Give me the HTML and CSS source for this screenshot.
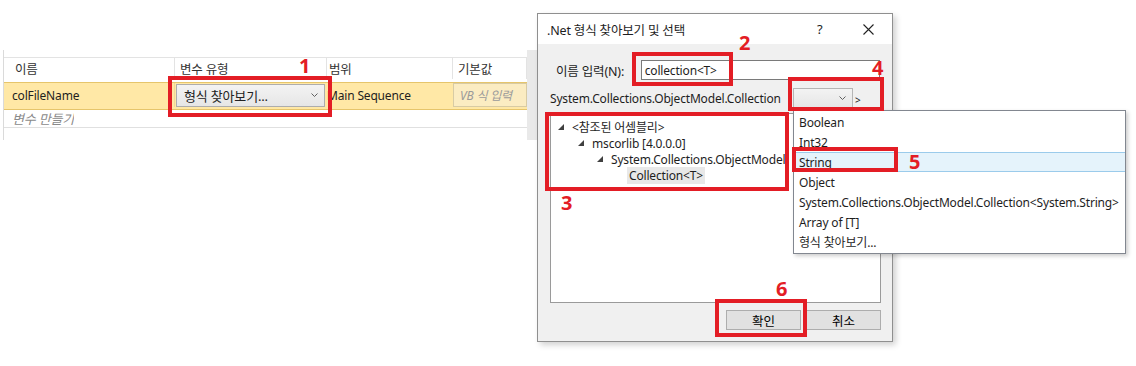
FILE: index.html
```html
<!DOCTYPE html>
<html lang="ko">
<head>
    <meta charset="UTF-8">
    <title>.Net 형식 찾아보기 및 선택</title>
    <link rel="stylesheet" href="styles.css">
</head>
<body>

<div class="stage">
    <div class="var-panel">
        <div class="var-grid">
            <div class="grid-row head-row">
                <div class="cell c-name first">이름</div>
                <div class="cell c-type">변수 유형</div>
                <div class="cell c-scope">범위</div>
                <div class="cell c-default">기본값</div>
            </div>
            <div class="grid-row sel-row">
                <div class="cell c-name first">colFileName</div>
                <div class="cell c-type">
                    <div class="combo wide">
                        <span>형식 찾아보기...</span>
                        <svg class="chev" width="7" height="4" viewBox="0 0 7 4"><polyline points="0.5,0.5 3.5,3.5 6.5,0.5" fill="none" stroke="#606060" stroke-width="1"/></svg>
                    </div>
                </div>
                <div class="cell c-scope">Main Sequence</div>
                <div class="cell c-default"><div class="expr">VB 식 입력</div></div>
            </div>
            <div class="grid-row new-row">
                <div class="cell first hint">변수 만들기</div>
            </div>
        </div>
        <div class="scroll-strip"></div>
    </div>

    <div class="dialog">
        <div class="title-bar">
            <span class="title">.Net 형식 찾아보기 및 선택</span>
            <span class="help">?</span>
            <svg class="close" width="11" height="11" viewBox="0 0 11 11"><path d="M0.5 0.5 L10.5 10.5 M10.5 0.5 L0.5 10.5" stroke="#222" stroke-width="1.1"/></svg>
        </div>
        <div class="dialog-body">
            <div class="name-row">
                <label class="name-label">이름 입력(N):</label>
                <div class="name-input">collection&lt;T&gt;</div>
            </div>
            <div class="generic-row">
                <span class="generic-name">System.Collections.ObjectModel.Collection</span>
                <div class="combo small">
                    <svg class="chev" width="7" height="4" viewBox="0 0 7 4"><polyline points="0.5,0.5 3.5,3.5 6.5,0.5" fill="none" stroke="#606060" stroke-width="1"/></svg>
                </div>
                <span class="gt">&gt;</span>
            </div>
            <div class="tree">
                <div class="node lvl0"><svg class="tri" width="6" height="6" viewBox="0 0 6 6"><polygon points="6,0 6,6 0,6" fill="#404040"/></svg>&lt;참조된 어셈블리&gt;</div>
                <div class="node lvl1"><svg class="tri" width="6" height="6" viewBox="0 0 6 6"><polygon points="6,0 6,6 0,6" fill="#404040"/></svg>mscorlib [4.0.0.0]</div>
                <div class="node lvl2"><svg class="tri" width="6" height="6" viewBox="0 0 6 6"><polygon points="6,0 6,6 0,6" fill="#404040"/></svg>System.Collections.ObjectModel</div>
                <div class="node lvl3"><span class="picked">Collection&lt;T&gt;</span></div>
            </div>
            <div class="buttons">
                <button class="btn">확인</button>
                <button class="btn">취소</button>
            </div>
        </div>
    </div>

    <ul class="drop-list">
        <li>Boolean</li>
        <li>Int32</li>
        <li class="hot">String</li>
        <li>Object</li>
        <li>System.Collections.ObjectModel.Collection&lt;System.String&gt;</li>
        <li>Array of [T]</li>
        <li>형식 찾아보기...</li>
    </ul>

    <!-- step markers drawn over the screenshot -->
    <div class="mark m1"></div><span class="num n1">1</span>
    <div class="mark m2"></div><span class="num n2">2</span>
    <div class="mark m3"></div><span class="num n3">3</span>
    <div class="mark m4"></div><span class="num n4">4</span>
    <div class="mark m5"></div><span class="num n5">5</span>
    <div class="mark m6"></div><span class="num n6">6</span>
</div>

</body>
</html>
```

FILE: styles.css
```css
body {
    margin: 0;
    background-color: #ffffff;
    font-family: "Noto Sans", "Noto Sans CJK KR", sans-serif;
    font-size: 12px;
    letter-spacing: -0.17px;
    color: #1e1e1e;
}
.stage {
    position: relative;
    width: 1136px;
    height: 366px;
    display: flex;
    align-items: flex-start;
    overflow: hidden;
}

/* variables grid */
.var-panel {
    display: flex;
    margin-top: 50px;
    margin-left: 3px;
    height: 90px;
}
.var-grid {
    width: 523px;
    border-left: 1px solid #dadada;
    padding-top: 7px;
    overflow: hidden;
}
.scroll-strip {
    width: 10px;
    background-color: #e9e9e9;
}
.grid-row {
    display: flex;
}
.cell {
    box-sizing: border-box;
    padding-left: 5px;
    display: flex;
    align-items: center;
    white-space: nowrap;
    overflow: hidden;
}
.first { padding-left: 8px; }
.c-name { width: 171px; }
.c-type { width: 152px; }
.c-scope { width: 126px; padding-left: 2px; }
.c-default { width: 74px; }
.head-row {
    height: 25px;
    border-top: 1px solid #e3e3e3;
    box-sizing: border-box;
    color: #333;
    padding-bottom: 3px;
}
.head-row .cell { border-right: 1px solid #e3e3e3; font-size: 12.5px; }
.head-row .c-name { padding-left: 11px; }
.sel-row {
    height: 28px;
    background-color: #ffe8a6;
    border-top: 1px solid #e6c56b;
    border-bottom: 1px solid #e6c56b;
    box-sizing: border-box;
    padding-bottom: 2px;
}
.sel-row .c-name { border-right: 1px solid #f0d898; }
.sel-row .c-type { padding-left: 1px; }
.sel-row .c-scope { padding-left: 0; }
.combo {
    box-sizing: border-box;
    display: flex;
    align-items: center;
    justify-content: space-between;
    border: 1px solid #adadad;
    background: linear-gradient(#f3f3f3, #e6e6e6);
}
.combo.wide {
    width: 149px;
    height: 23px;
    padding: 0 6px 0 7px;
    font-size: 13px;
    color: #222;
}
.sel-row .c-default { padding-left: 0; }
.expr {
    box-sizing: border-box;
    width: 80px;
    height: 24px;
    border: 1px solid #d8cba4;
    background-color: #fbecc2;
    color: #9a9a9a;
    font-style: italic;
    padding-left: 6px;
    display: flex;
    align-items: center;
}
.new-row {
    height: 17px;
    border-bottom: 1px solid #e0e0e0;
}
.hint {
    color: #8a8a8a;
    font-style: italic;
    font-size: 13px;
}

/* dialog */
.dialog {
    margin-top: 13px;
    width: 356px;
    height: 329px;
    box-sizing: border-box;
    border: 1px solid #8f8f8f;
    background-color: #f0f0f0;
    box-shadow: 3px 3px 6px rgba(0, 0, 0, 0.18);
    display: flex;
    flex-direction: column;
}
.title-bar {
    height: 30px;
    background-color: #ffffff;
    display: flex;
    align-items: center;
    padding-left: 9px;
}
.title { flex: 1; font-size: 12.5px; }
.help { width: 46px; font-size: 13px; }
.close { margin-right: 18px; }
.dialog-body {
    flex: 1;
    display: flex;
    flex-direction: column;
    padding: 16px 12px 11px 12px;
}
.name-row {
    display: flex;
    align-items: center;
    height: 20px;
}
.name-label {
    width: 85px;
    padding-left: 6px;
    font-size: 12.5px;
}
.name-input {
    box-sizing: border-box;
    width: 240px;
    height: 20px;
    border: 1px solid #7a7a7a;
    background-color: #ffffff;
    padding-left: 3px;
    display: flex;
    align-items: center;
}
.generic-row {
    display: flex;
    align-items: center;
    height: 20px;
    margin-top: 8px;
}
.generic-name { width: 243px; }
.combo.small {
    width: 60px;
    height: 20px;
    justify-content: flex-end;
    padding-right: 6px;
    border-color: #b5b5b5;
}
.gt { margin-left: 2px; font-size: 10px; padding-top: 3px; }
.tree {
    box-sizing: border-box;
    margin-top: 5px;
    height: 190px;
    width: 331px;
    border: 1px solid #9a9a9a;
    background-color: #ffffff;
    padding-top: 5px;
}
.node {
    height: 16px;
    display: flex;
    align-items: center;
    white-space: nowrap;
}
.tri { margin-right: 8px; }
.lvl0 { padding-left: 7px; }
.lvl1 { padding-left: 27px; }
.lvl2 { padding-left: 46px; }
.lvl3 { padding-left: 76px; }
.picked {
    background-color: #e8e8e8;
    padding: 0 2px;
}
.buttons {
    display: flex;
    justify-content: flex-end;
    gap: 5px;
    margin-top: 7px;
    margin-right: -1px;
}
.btn {
    width: 75px;
    height: 20px;
    border: 1px solid #adadad;
    background-color: #e1e1e1;
    font-family: inherit;
    font-size: 12.5px;
    padding: 0;
}

/* opened dropdown */
.drop-list {
    position: absolute;
    left: 793px;
    top: 110px;
    width: 333px;
    margin: 0;
    padding: 1px 0;
    list-style: none;
    box-sizing: border-box;
    border: 1px solid #828790;
    background-color: #ffffff;
    box-shadow: 2px 2px 4px rgba(0, 0, 0, 0.2);
}
.drop-list li {
    height: 20px;
    box-sizing: border-box;
    padding-left: 5px;
    display: flex;
    align-items: center;
    white-space: nowrap;
}
.drop-list li.hot {
    background-color: #e5f3fb;
    border-top: 1px solid #9bcbeb;
    border-bottom: 1px solid #9bcbeb;
}

/* red markers */
.mark {
    position: absolute;
    box-sizing: border-box;
    border: 4px solid #e31d25;
}
.m1 { left: 168px; top: 76px; width: 164px; height: 41px; }
.m2 { left: 632px; top: 52px; width: 101px; height: 34px; }
.m3 { left: 545px; top: 112px; width: 244px; height: 79px; }
.m4 { left: 788px; top: 77px; width: 96px; height: 34px; }
.m5 { left: 792px; top: 147px; width: 106px; height: 25px; }
.m6 { left: 715px; top: 299px; width: 92px; height: 38px; }
.num {
    position: absolute;
    color: #e31d25;
    font-family: "Noto Sans", sans-serif;
    font-weight: bold;
    font-size: 20px;
    line-height: 20px;
    letter-spacing: 0;
}
.n1 { left: 299px; top: 56px; }
.n2 { left: 739px; top: 33px; }
.n3 { left: 561px; top: 193px; }
.n4 { left: 872px; top: 58px; }
.n5 { left: 909px; top: 152px; }
.n6 { left: 776px; top: 279px; }
```
